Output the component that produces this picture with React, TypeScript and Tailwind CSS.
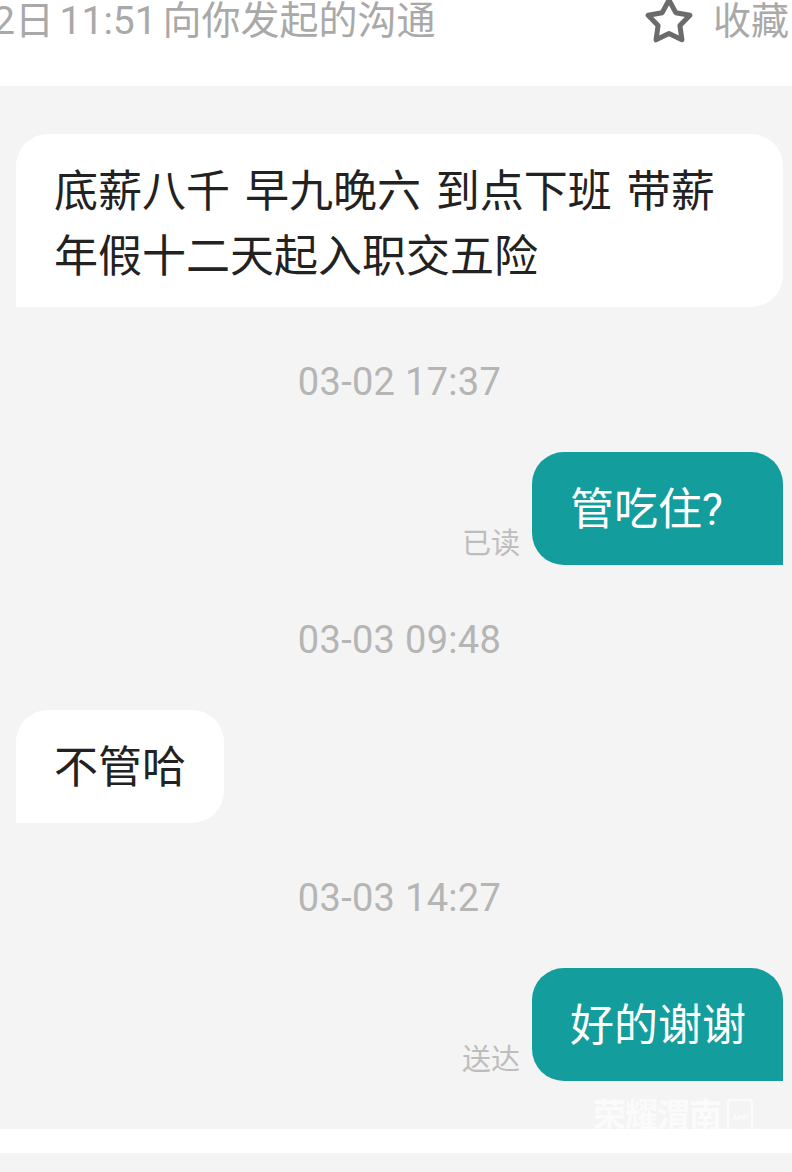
import React from 'react';

type Msg =
  | { kind: 'time'; text: string }
  | { kind: 'in'; text: string }
  | { kind: 'out'; text: string; status: string };

const messages: Msg[] = [
  { kind: 'in', text: '底薪八千 早九晚六 到点下班 带薪年假十二天起入职交五险' },
  { kind: 'time', text: '03-02 17:37' },
  { kind: 'out', text: '管吃住?', status: '已读' },
  { kind: 'time', text: '03-03 09:48' },
  { kind: 'in', text: '不管哈' },
  { kind: 'time', text: '03-03 14:27' },
  { kind: 'out', text: '好的谢谢', status: '送达' },
];

const StarOutline = () => (
  <svg width="48" height="46" viewBox="0 0 48 46" className="mt-[-3px] shrink-0">
    <path
      d="M24 3 L30.76 15.7 L44.92 18.2 L34.94 28.55 L36.93 42.8 L24 36.5 L11.07 42.8 L13.06 28.55 L3.08 18.2 L17.24 15.7 Z"
      fill="none"
      stroke="#6b6b6b"
      strokeWidth="5"
      strokeLinejoin="round"
    />
  </svg>
);

const Header = () => (
  <div className="flex h-[86px] items-start justify-between overflow-hidden bg-white">
    <div className="ml-[-7px] whitespace-nowrap text-[39px] leading-[42px] text-[#a9a9a9] [word-spacing:-4px]">
      2日 11:51 向你发起的沟通
    </div>
    <div className="flex items-start pr-[3px]">
      <StarOutline />
      <span className="ml-[20px] text-[38px] leading-[42px] text-[#a9a9a9]">收藏</span>
    </div>
  </div>
);

const Bubble = ({ msg, first }: { msg: Msg; first: boolean }) => {
  if (msg.kind === 'time') {
    return (
      <div className="mt-[55px] mb-[50px] h-[40px] text-center text-[38px] leading-[40px] tracking-[0.3px] text-[#b5b5b5]">
        {msg.text}
      </div>
    );
  }
  if (msg.kind === 'in') {
    return (
      <div
        className={`self-start rounded-[32px] rounded-bl-none bg-white pl-[38px] pr-[38px] pt-[26px] text-[44px] leading-[65px] text-[#222] [word-spacing:4px] ${
          first ? 'pb-[17px]' : 'pb-[22px]'
        }`}
      >
        {msg.text}
      </div>
    );
  }
  return (
    <div className="flex items-end justify-end gap-[12px]">
      <span className="mb-[6px] text-[29px] leading-[29px] text-[#bdbdbd]">{msg.status}</span>
      <div className="min-w-[251px] rounded-[32px] rounded-br-none bg-[#139d9d] pl-[38px] pr-[37px] pt-[26px] pb-[22px] text-[44px] leading-[65px] text-white">
        {msg.text}
      </div>
    </div>
  );
};

export default function App() {
  return (
    <div className="relative h-[1172px] w-full overflow-hidden bg-[#f4f4f4] [font-family:Roboto,'Noto_Sans_CJK_SC',sans-serif]">
      <Header />
      <div className="flex flex-col pl-4 pr-[9px] pt-[48px]">
        {messages.map((m, i) => (
          <Bubble key={i} msg={m} first={i === 0} />
        ))}
      </div>
      <div className="mt-[48px] h-[24px] bg-white" />

      {/* watermark */}
      <div className="absolute left-[593px] top-[1096px] flex items-start gap-[6px] opacity-70">
        <span className="text-[33px] font-bold leading-[40px] tracking-[-1px] text-white">荣耀渭南</span>
        <div className="mt-[3px] flex h-[38px] w-[26px] items-center justify-center rounded-[4px] border-2 border-white">
          <span className="text-[8px] font-bold text-white">APP</span>
        </div>
      </div>
    </div>
  );
}
